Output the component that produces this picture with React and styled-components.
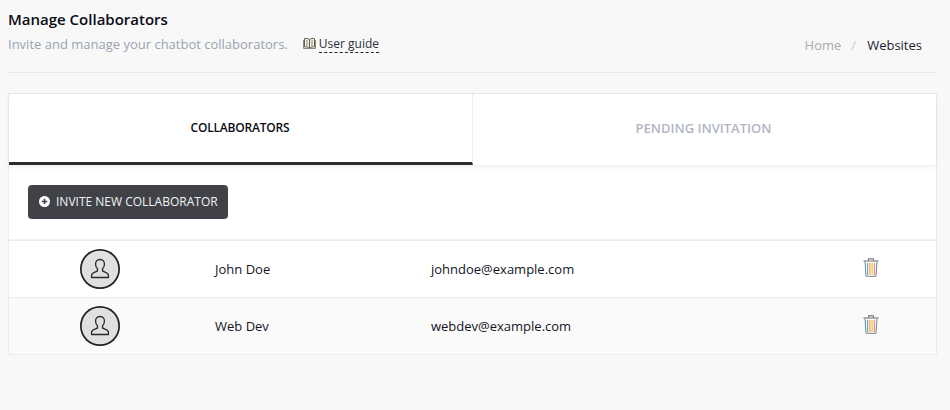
import React from "react";
import styled, { createGlobalStyle } from "styled-components";

const GlobalStyle = createGlobalStyle`
  html, body {
    margin: 0;
    padding: 0;
    height: 100%;
    background: #f8f8f8;
    font-family: "Open Sans", "Liberation Sans", sans-serif;
  }
`;

const Page = styled.div`
  width: 950px;
  height: 410px;
  box-sizing: border-box;
  padding: 9px 13px 0 8px;
  overflow: hidden;
`;

const Header = styled.header`
  display: flex;
  justify-content: space-between;
  height: 64px;
  box-sizing: border-box;
  border-bottom: 1px solid #e8e8e8;
`;

const Title = styled.h1`
  margin: 0;
  font-size: 15px;
  line-height: 20px;
  font-weight: 600;
  color: #0b0b16;
`;

const Subtitle = styled.div`
  display: flex;
  align-items: center;
  margin-top: 6px;
  font-size: 13px;
  line-height: 18px;
  color: #9aa3b2;
`;

const GuideLink = styled.a`
  display: inline-flex;
  align-items: center;
  margin-left: 15px;
  color: #2c2e3e;
  font-size: 12px;
`;

const GuideText = styled.span`
  margin-left: 3px;
  border-bottom: 1px dashed #222;
  line-height: 16px;
`;

const BookWrap = styled.span`
  display: flex;
  margin-top: -2px;
`;

const Crumbs = styled.nav`
  display: flex;
  align-items: center;
  align-self: flex-start;
  margin-top: 27px;
  margin-right: 15px;
  font-size: 13px;
  line-height: 18px;
  color: #a9a9ae;
`;

const CrumbSep = styled.span`
  margin: 0 11px 0 10px;
  color: #c9c9cc;
`;

const CrumbActive = styled.span`
  color: #1c2233;
`;

const Card = styled.section`
  margin-top: 20px;
  background: #fff;
  border: 1px solid #ececf0;
  border-top-color: #e8e8e8;
`;

const Tabs = styled.div`
  display: grid;
  grid-template-columns: 464px 1fr;
  height: 71px;
  box-sizing: border-box;
  box-shadow: 0 2px 4px rgba(0, 0, 0, 0.07);
`;

const Tab = styled.div`
  display: flex;
  align-items: center;
  justify-content: center;
  box-sizing: border-box;
  font-size: ${(p) => (p.$active ? "12px" : "13px")};
  font-weight: 600;
  letter-spacing: ${(p) => (p.$active ? "-0.2px" : "0")};
  padding-bottom: ${(p) => (p.$active ? "1px" : "3px")};
  padding-right: ${(p) => (p.$active ? "1px" : "2px")};
  color: ${(p) => (p.$active ? "#0b0b16" : "#b0b6c2")};
  border-right: ${(p) => (p.$active ? "1px solid #ececf0" : "0")};
  border-bottom: ${(p) => (p.$active ? "3px solid #2b2b2e" : "0")};
`;

const Toolbar = styled.div`
  padding: 20px 19px;
  display: flex;
  border-bottom: 1px solid #f1f1f5;
`;

const InviteButton = styled.button`
  display: inline-flex;
  align-items: center;
  gap: 6px;
  height: 34px;
  width: 200px;
  box-sizing: border-box;
  padding: 0 0 1px 11px;
  border: 0;
  border-radius: 4px;
  background: #404247;
  color: #f2f4f8;
  font-family: inherit;
  font-size: 12px;
  white-space: nowrap;
`;

const Row = styled.div`
  display: grid;
  grid-template-columns: 182px 240px 1fr 73px;
  align-items: center;
  height: 57px;
  box-sizing: border-box;
  border-top: 1px solid #ececf0;
  background: ${(p) => (p.$alt ? "#fafafa" : "#fff")};
  font-size: 13px;
  color: #14141f;
`;

const AvatarCell = styled.div`
  display: flex;
  justify-content: center;
  margin-left: -1px;
`;

const Avatar = styled.div`
  width: 40px;
  height: 40px;
  box-sizing: border-box;
  box-shadow: inset 0 0 0 1.7px #222;
  border-radius: 50%;
  background: #e0e0e0;
  display: flex;
  align-items: center;
  justify-content: center;
`;

const NameCell = styled.div`
  padding-left: 24px;
`;

const TrashCell = styled.div`
  display: flex;
  margin-top: -3px;
`;

const BookIcon = () => (
  <svg width="13" height="13" viewBox="0 0 13 13" fill="none" stroke="#5b5f55" strokeWidth="1">
    <path d="M6.5 2.5C5 1.4 3 1.2 1.5 1.5v8.5c1.7-.3 3.5 0 5 1 1.5-1 3.3-1.3 5-1V1.5c-1.5-.3-3.5-.1-5 1z" fill="#f3efe4" />
    <path d="M6.5 2.5V11" />
    <path d="M3 4h2M3 6h2M3 8h2M8 4h2M8 6h2M8 8h2" stroke="#8a8d80" />
    <path d="M.5 3v8.5h12V3" stroke="#8a8d80" />
  </svg>
);

const PlusIcon = () => (
  <svg width="11" height="11" viewBox="0 0 11 11">
    <circle cx="5.5" cy="5.5" r="5.5" fill="#fff" />
    <path d="M5.5 2.7v5.6M2.7 5.5h5.6" stroke="#404247" strokeWidth="1.6" />
  </svg>
);

const UserIcon = () => (
  <svg width="22" height="22" viewBox="0 0 22 22" fill="none" stroke="#2a2a2a" strokeWidth="1.3" strokeLinejoin="round">
    <path d="M11 1.5c-3 0-4.6 2.2-4.4 5 .1 2 1 3.4 1.9 4.3v2.1c-1.3.9-4.6 1.5-5.6 3.2-.4.7-.4 2.4-.4 3.4h17c0-1 0-2.7-.4-3.4-1-1.7-4.3-2.3-5.6-3.2v-2.1c.9-.9 1.8-2.3 1.9-4.3.2-2.8-1.4-5-4.4-5z" />
  </svg>
);

const TrashIcon = () => (
  <svg width="16" height="19" viewBox="0 0 16 19" fill="none">
    <path d="M5.5 2.5V.8h5v1.7" stroke="#5d5a60" />
    <path d="M.5 3h15" stroke="#66646b" />
    <path d="M2 3.5 3 18.3h10l1-14.8" stroke="#7b8088" />
    <path d="M4.6 5v12" stroke="#5aa9ee" strokeWidth="1.2" />
    <path d="M6.9 5v12" stroke="#f59f32" strokeWidth="1.2" />
    <path d="M9.1 5v12" stroke="#f7c02c" strokeWidth="1.2" />
    <path d="M11.4 5v12" stroke="#ee84a0" strokeWidth="1.2" />
  </svg>
);

const collaborators = [
  { name: "John Doe", email: "johndoe@example.com" },
  { name: "Web Dev", email: "webdev@example.com" },
];

const App = () => (
  <Page>
    <GlobalStyle />
    <Header>
      <div>
        <Title>Manage Collaborators</Title>
        <Subtitle>
          Invite and manage your chatbot collaborators.
          <GuideLink>
            <BookWrap>
              <BookIcon />
            </BookWrap>
            <GuideText>User guide</GuideText>
          </GuideLink>
        </Subtitle>
      </div>
      <Crumbs>
        Home
        <CrumbSep>/</CrumbSep>
        <CrumbActive>Websites</CrumbActive>
      </Crumbs>
    </Header>

    <Card>
      <Tabs>
        <Tab $active>COLLABORATORS</Tab>
        <Tab>PENDING INVITATION</Tab>
      </Tabs>
      <Toolbar>
        <InviteButton>
          <PlusIcon />
          INVITE NEW COLLABORATOR
        </InviteButton>
      </Toolbar>
      {collaborators.map((c, i) => (
        <Row key={c.email} $alt={i % 2 === 1}>
          <AvatarCell>
            <Avatar>
              <UserIcon />
            </Avatar>
          </AvatarCell>
          <NameCell>{c.name}</NameCell>
          <div>{c.email}</div>
          <TrashCell>
            <TrashIcon />
          </TrashCell>
        </Row>
      ))}
    </Card>
  </Page>
);

export default App;
